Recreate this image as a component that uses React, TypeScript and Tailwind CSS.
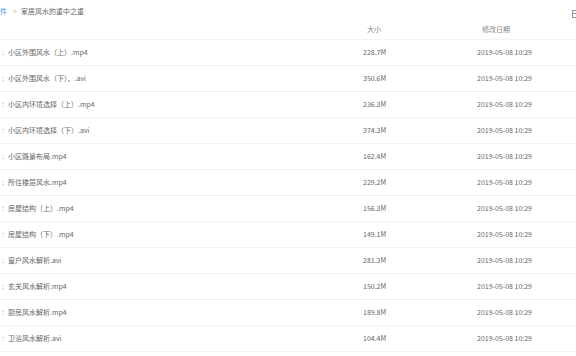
const files = [
  { name: "小区外围风水（上）.mp4", size: "228.7M" },
  { name: "小区外围风水（下）、.avi", size: "350.6M" },
  { name: "小区内环境选择（上）.mp4", size: "236.3M" },
  { name: "小区内环境选择（下）.avi", size: "374.3M" },
  { name: "小区路景布局.mp4", size: "162.4M" },
  { name: "所住楼层风水.mp4", size: "229.2M" },
  { name: "房屋结构（上）.mp4", size: "156.3M" },
  { name: "房屋结构（下）.mp4", size: "149.1M" },
  { name: "窗户风水解析.avi", size: "281.3M" },
  { name: "玄关风水解析.mp4", size: "150.2M" },
  { name: "厨房风水解析.mp4", size: "189.8M" },
  { name: "卫浴风水解析.avi", size: "104.4M" },
]

export default function App() {
  return (
    <div
      className="w-[576px] h-[356px] overflow-hidden bg-white text-[7px] leading-none text-[#666]"
      style={{ fontFamily: '"Noto Sans CJK SC", "Liberation Sans", sans-serif' }}
    >
      {/* breadcrumb */}
      <div className="h-[20px] flex items-center pt-[2px]">
        <span className="-ml-[7px] text-[#4a9cf0]">文件</span>
        <span className="ml-[6px] text-[#bbb]">&gt;</span>
        <span className="ml-[4px]">家居风水的重中之重</span>
        <div className="ml-auto -mr-[4px] mt-[6px]">
          <svg width="8" height="8" viewBox="0 0 8 8" fill="none" stroke="#8a9bb0" strokeWidth="1">
            <rect x="0.5" y="0.5" width="7" height="7" />
            <line x1="0.5" y1="3.5" x2="7.5" y2="3.5" />
          </svg>
        </div>
      </div>

      {/* column header */}
      <div className="h-[20px] grid grid-cols-[363px_114px_1fr] items-center border-b border-[#f2f3f5] text-[#888]">
        <span />
        <span className="pl-[4px]">大小</span>
        <span className="pl-[5px]">修改日期</span>
      </div>

      {files.map((f) => (
        <div
          key={f.name}
          className="h-[26px] grid grid-cols-[363px_114px_1fr] items-center border-b border-[#f2f3f5]"
        >
          <div className="flex items-center">
            <span className="w-[8px] pl-[2px] text-[#999]">:</span>
            <span>{f.name}</span>
          </div>
          <span>{f.size}</span>
          <span>2019-05-08 10:29</span>
        </div>
      ))}
    </div>
  )
}
